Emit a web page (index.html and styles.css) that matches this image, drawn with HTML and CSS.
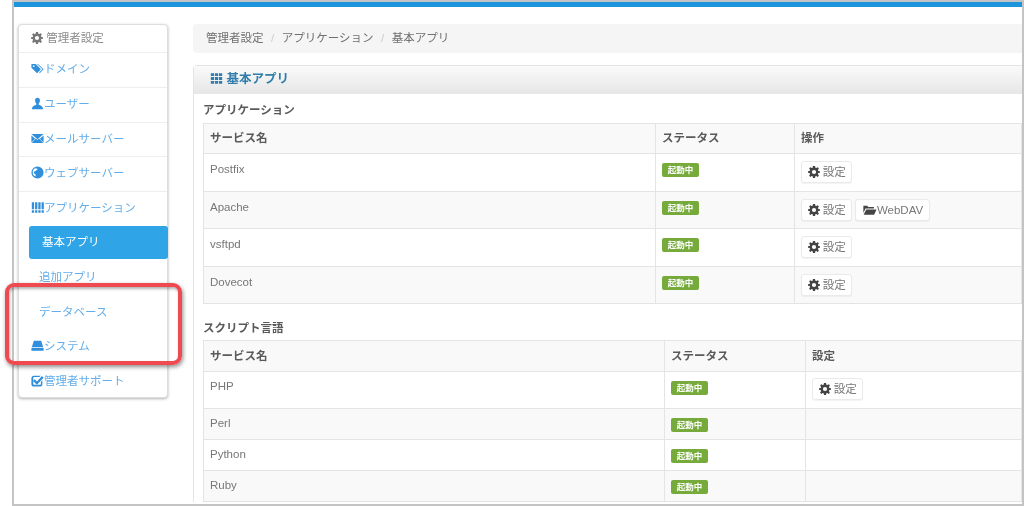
FILE: index.html
```html
<!DOCTYPE html>
<html lang="ja">
<head>
    <meta charset="UTF-8">
    <meta name="viewport" content="width=device-width, initial-scale=1.0">
    <title>基本アプリ</title>
    <link rel="stylesheet" href="styles.css">
</head>
<body>

<svg class="icon-defs" width="0" height="0">
    <defs>
        <symbol id="i-cog" viewBox="0 0 16 16">
            <path fill-rule="evenodd" d="M6.600 0h2.800l.4 2.200 1.300.55L12.950 1.500l1.550 1.550-1.250 2.300.55 1.300 2.200.35v2l-2.200.35-.55 1.300 1.250 2.300-1.550 1.550-1.850-1.250-1.300.55-.4 2.200H6.600l-.4-2.200-1.300-.55-1.850 1.250-1.550-1.550 1.250-2.300-.55-1.300L0 9V7l2.200-.35.55-1.300-1.250-2.300L3.050 1.500 4.900 2.750l1.300-.55zM8 5.200a2.800 2.800 0 1 0 0 5.600 2.800 2.800 0 0 0 0-5.600z"/>
        </symbol>
        <symbol id="i-tags" viewBox="0 0 16 16">
            <path fill-rule="evenodd" d="M.5 2.500h5.200l6.500 6.500-4.700 4.700-7-6.700zM3.300 4a1.100 1.100 0 1 0 0 2.200 1.100 1.100 0 0 0 0-2.200z"/>
            <path d="M7.300 2.500h1.200l7 6.500-4.700 4.700-.7-.7 4-4z"/>
        </symbol>
        <symbol id="i-user" viewBox="0 0 16 16">
            <path d="M8 1C5.900 1 5 2.600 5 4.400c0 1.600.7 3 1.500 3.700v1.300C4.500 10.300 1.500 10.800 1 15h14c-.5-4.200-3.500-4.700-5.500-5.600V8.100c.8-.7 1.500-2.100 1.500-3.700C11 2.600 10.100 1 8 1z"/>
        </symbol>
        <symbol id="i-mail" viewBox="0 0 16 16">
            <path d="M.5 2.500h15L8 9zM.5 4.300v8.500l4.600-4.500zM15.500 4.300v8.500l-4.600-4.500zM.8 13.500h14.400L10 7.900 8 9.800 6 7.900z"/>
        </symbol>
        <symbol id="i-globe" viewBox="0 0 16 16">
            <path fill-rule="evenodd" d="M8 .5a7.500 7.500 0 1 0 0 15 7.500 7.500 0 0 0 0-15zM5 2.800c1 .4 2 .3 3.300.8-.2 1.200-1.500 1-2.100 2-.6.900-2.200.6-2.700 1.900-.5 1.200.6 2.100 1.900 2.300.3 1.100.5 2 .1 3.100C3.300 12 2.100 10.200 2.100 8 2.100 5.700 3.200 3.800 5 2.800z"/>
        </symbol>
        <symbol id="i-th" viewBox="0 0 16 16">
            <path d="M1 1.500h4v3.400H1zM6 1.500h4v3.400H6zM11 1.500h4v3.400h-4zM1 6.300h4v3.400H1zM6 6.300h4v3.400H6zM11 6.300h4v3.400h-4zM1 11.100h4v3.400H1zM6 11.100h4v3.400H6zM11 11.100h4v3.400h-4z"/>
        </symbol>
        <symbol id="i-bars" viewBox="0 0 16 16">
            <path d="M1 1.500h2.800v8.500H1zM5 1.500h2.800v8.500H5zM9 1.500h2.800v8.500H9zM13 1.500h2.800v8.500H13zM1 11.500h2.800v3H1zM5 11.500h2.800v3H5zM9 11.500h2.800v3H9zM13 11.500h2.800v3H13z"/>
        </symbol>
        <symbol id="i-hdd" viewBox="0 0 16 16">
            <path d="M3.500 2h9l2.500 8H1zM.5 11h15v3.500H.5z"/>
        </symbol>
        <symbol id="i-check" viewBox="0 0 16 16">
            <path d="M3.500 2h8.500l-1.700 1.800H3.800c-.6 0-1 .4-1 1v7.400c0 .6.4 1 1 1h7.400c.6 0 1-.4 1-1V9.500L14 7.700v4.800c0 1.700-1.300 3-3 3H3.500c-1.700 0-3-1.300-3-3V5c0-1.700 1.300-3 3-3z"/>
            <path d="M4.500 6.500L7.300 9.300 13.500 2.500l2 2-8.200 8.600-4.800-4.600z"/>
        </symbol>
        <symbol id="i-folder" viewBox="0 0 16 16">
            <path d="M1 3h4.500l1 1.500H13v1.800H3.500L1 11.500z"/>
            <path d="M4.300 7.300H16l-2.700 6.200H1.300z"/>
        </symbol>
    </defs>
</svg>

<div class="frame">
    <div class="top-bar"></div>

    <div class="layout">
        <!-- Side menu -->
        <div class="side-menu">
            <div class="side-title"><svg class="icon"><use href="#i-cog"/></svg> 管理者設定</div>
            <a class="side-item"><svg class="icon"><use href="#i-tags"/></svg>ドメイン</a>
            <a class="side-item"><svg class="icon"><use href="#i-user"/></svg>ユーザー</a>
            <a class="side-item"><svg class="icon"><use href="#i-mail"/></svg>メールサーバー</a>
            <a class="side-item"><svg class="icon"><use href="#i-globe"/></svg>ウェブサーバー</a>
            <a class="side-item no-line"><svg class="icon"><use href="#i-bars"/></svg>アプリケーション</a>
            <a class="side-sub active">基本アプリ</a>
            <a class="side-sub">追加アプリ</a>
            <a class="side-sub">データベース</a>
            <a class="side-item"><svg class="icon"><use href="#i-hdd"/></svg>システム</a>
            <a class="side-item last"><svg class="icon"><use href="#i-check"/></svg>管理者サポート</a>
        </div>

        <div class="main">
            <div class="breadcrumb">
                <span>管理者設定</span><span class="sep">/</span><span>アプリケーション</span><span class="sep">/</span><span>基本アプリ</span>
            </div>

            <div class="panel">
                <div class="panel-head"><svg class="icon"><use href="#i-th"/></svg> 基本アプリ</div>
                <div class="panel-body">
                    <h4>アプリケーション</h4>
                    <table class="apps">
                        <thead>
                        <tr><th>サービス名</th><th>ステータス</th><th>操作</th></tr>
                        </thead>
                        <tbody>
                        <tr>
                            <td>Postfix</td>
                            <td><span class="label">起動中</span></td>
                            <td><button class="btn"><svg class="icon"><use href="#i-cog"/></svg> 設定</button></td>
                        </tr>
                        <tr>
                            <td>Apache</td>
                            <td><span class="label">起動中</span></td>
                            <td><button class="btn"><svg class="icon"><use href="#i-cog"/></svg> 設定</button> <button class="btn"><svg class="icon folder"><use href="#i-folder"/></svg>WebDAV</button></td>
                        </tr>
                        <tr>
                            <td>vsftpd</td>
                            <td><span class="label">起動中</span></td>
                            <td><button class="btn"><svg class="icon"><use href="#i-cog"/></svg> 設定</button></td>
                        </tr>
                        <tr>
                            <td>Dovecot</td>
                            <td><span class="label">起動中</span></td>
                            <td><button class="btn"><svg class="icon"><use href="#i-cog"/></svg> 設定</button></td>
                        </tr>
                        </tbody>
                    </table>

                    <h4 class="second">スクリプト言語</h4>
                    <table class="langs">
                        <thead>
                        <tr><th>サービス名</th><th>ステータス</th><th>設定</th></tr>
                        </thead>
                        <tbody>
                        <tr>
                            <td>PHP</td>
                            <td><span class="label">起動中</span></td>
                            <td><button class="btn"><svg class="icon"><use href="#i-cog"/></svg> 設定</button></td>
                        </tr>
                        <tr class="short">
                            <td>Perl</td>
                            <td><span class="label">起動中</span></td>
                            <td></td>
                        </tr>
                        <tr class="short">
                            <td>Python</td>
                            <td><span class="label">起動中</span></td>
                            <td></td>
                        </tr>
                        <tr class="short">
                            <td>Ruby</td>
                            <td><span class="label">起動中</span></td>
                            <td></td>
                        </tr>
                        </tbody>
                    </table>
                </div>
            </div>
        </div>
    </div>
</div>

<!-- Red callout drawn over the menu -->
<div class="callout"></div>

</body>
</html>
```

FILE: styles.css
```css
html, body {
    margin: 0;
    padding: 0;
    height: 100%;
    overflow: hidden;
    background-color: #fff;
}

body {
    font-family: "Liberation Sans", "Noto Sans CJK JP", sans-serif;
    font-size: 11.5px;
    color: #777;
}

.icon-defs {
    position: absolute;
}

.frame {
    box-sizing: border-box;
    width: 1012px;
    height: 506px;
    margin-left: 12px;
    border-left: 2px solid #c4c4c4;
    border-right: 2px solid #c4c4c4;
    border-bottom: 2px solid #c4c4c4;
    overflow: hidden;
    filter: blur(0.5px);
}

.top-bar {
    height: 7px;
    background-color: #1c95dd;
    border-top: 2px solid #c4c4c4;
    box-sizing: border-box;
}

.layout {
    display: flex;
    align-items: flex-start;
    padding: 17px 0 0 4px;
}

.icon {
    display: inline-block;
    width: 12px;
    height: 12px;
    fill: currentColor;
    vertical-align: -2px;
}

/* Side menu */
.side-menu {
    flex: none;
    box-sizing: border-box;
    width: 150px;
    height: 374px;
    background-color: #fff;
    border: 1px solid #ddd;
    border-radius: 4px;
    box-shadow: 0 1px 3px rgba(0, 0, 0, 0.3);
}

.side-title {
    height: 28px;
    line-height: 27px;
    padding-left: 12px;
    color: #8c8c8c;
    border-bottom: 1px solid #eee;
    box-sizing: border-box;
}

.side-title .icon {
    color: #777;
}

.side-item {
    display: block;
    box-sizing: border-box;
    height: 34.8px;
    line-height: 33px;
    padding-left: 12px;
    color: #63aeea;
    border-bottom: 1px solid #eee;
}

.side-item .icon {
    width: 13px;
    height: 13px;
    color: #2f8fdc;
}

.side-item.no-line {
    height: 34px;
    border-bottom: none;
}

.side-item.last {
    border-bottom: none;
}

.side-sub {
    display: block;
    box-sizing: border-box;
    height: 34.8px;
    line-height: 35px;
    margin-left: 10px;
    padding-left: 10px;
    color: #63aeea;
}

.side-sub.active {
    height: 33px;
    line-height: 33px;
    margin-right: -1px;
    margin-bottom: 1px;
    background-color: #2fa4e7;
    color: #fff;
    border-radius: 3px;
    padding-left: 13px;
}

/* Main column */
.main {
    flex: 1;
    min-width: 0;
    margin-left: 25px;
}

.breadcrumb {
    height: 29px;
    line-height: 28px;
    padding-left: 13px;
    background-color: #f5f5f5;
    border-radius: 4px 0 0 4px;
    color: #707070;
}

.breadcrumb .sep {
    padding: 0 7.5px;
    color: #ccc;
}

.panel {
    margin-top: 12px;
    border-left: 1px solid #e4e4e4;
    border-top: 1px solid #e4e4e4;
    border-radius: 4px 0 0 0;
}

.panel-head {
    height: 28px;
    line-height: 27px;
    padding-left: 16px;
    font-size: 12.5px;
    font-weight: bold;
    color: #317eac;
    background: linear-gradient(#fafafa, #e6e6e6);
}

.panel-head .icon {
    width: 13px;
    height: 13px;
}

.panel-body {
    padding: 8px 0 0 9px;
}

h4 {
    margin: 0;
    height: 21px;
    line-height: 16px;
    font-size: 11.5px;
    font-weight: bold;
    color: #5a5a5a;
}

h4.second {
    height: 20px;
    margin-top: 16px;
}

/* Tables */
table {
    width: 100%;
    table-layout: fixed;
    border-collapse: collapse;
    border: 1px solid #e4e4e4;
    border-right: none;
}

.apps th:nth-child(1) { width: 452px; }
.apps th:nth-child(2) { width: 139px; }
.langs th:nth-child(1) { width: 461px; }
.langs th:nth-child(2) { width: 141px; }

th, td {
    box-sizing: border-box;
    padding: 7px 6px;
    text-align: left;
    vertical-align: top;
    border: 1px solid #e4e4e4;
    line-height: 16px;
}

th {
    height: 29px;
    padding-top: 6px;
    background-color: #f9f9f9;
    color: #5a5a5a;
    font-weight: bold;
}

td {
    height: 37.5px;
}

tbody tr:nth-child(even) td {
    background-color: #f9f9f9;
}

.langs th {
    height: 31px;
    padding-top: 7px;
}

.langs td {
    height: 37px;
    padding-top: 6px;
}

.langs tr.short td {
    height: 31px;
}

.label {
    display: inline-block;
    height: 14px;
    line-height: 14px;
    width: 37px;
    text-align: center;
    font-size: 8.5px;
    font-weight: bold;
    color: #fff;
    background-color: #76ab3c;
    border-radius: 2px;
    vertical-align: top;
    margin-top: 2px;
}

.langs .label {
    margin-top: 3px;
}

.btn {
    box-sizing: border-box;
    height: 22px;
    padding: 0 5.5px;
    font-family: inherit;
    font-size: 11.5px;
    line-height: 20px;
    color: #777;
    background-color: #fff;
    border: 1px solid #eaeaea;
    border-radius: 3px;
    box-shadow: 0 1px 1px rgba(0, 0, 0, 0.05);
    vertical-align: top;
}

.btn .icon {
    color: #444;
}

.btn .icon.folder {
    width: 15px;
    height: 14px;
    vertical-align: -3px;
}

/* Callout */
.callout {
    position: absolute;
    left: 5px;
    top: 283px;
    width: 177px;
    height: 82px;
    box-sizing: border-box;
    border: 4px solid #ef4a50;
    border-radius: 9px;
    box-shadow: 1px 2px 4px rgba(0, 0, 0, 0.45), inset 1px 2px 3px rgba(0, 0, 0, 0.3);
    filter: blur(0.4px);
}
```
